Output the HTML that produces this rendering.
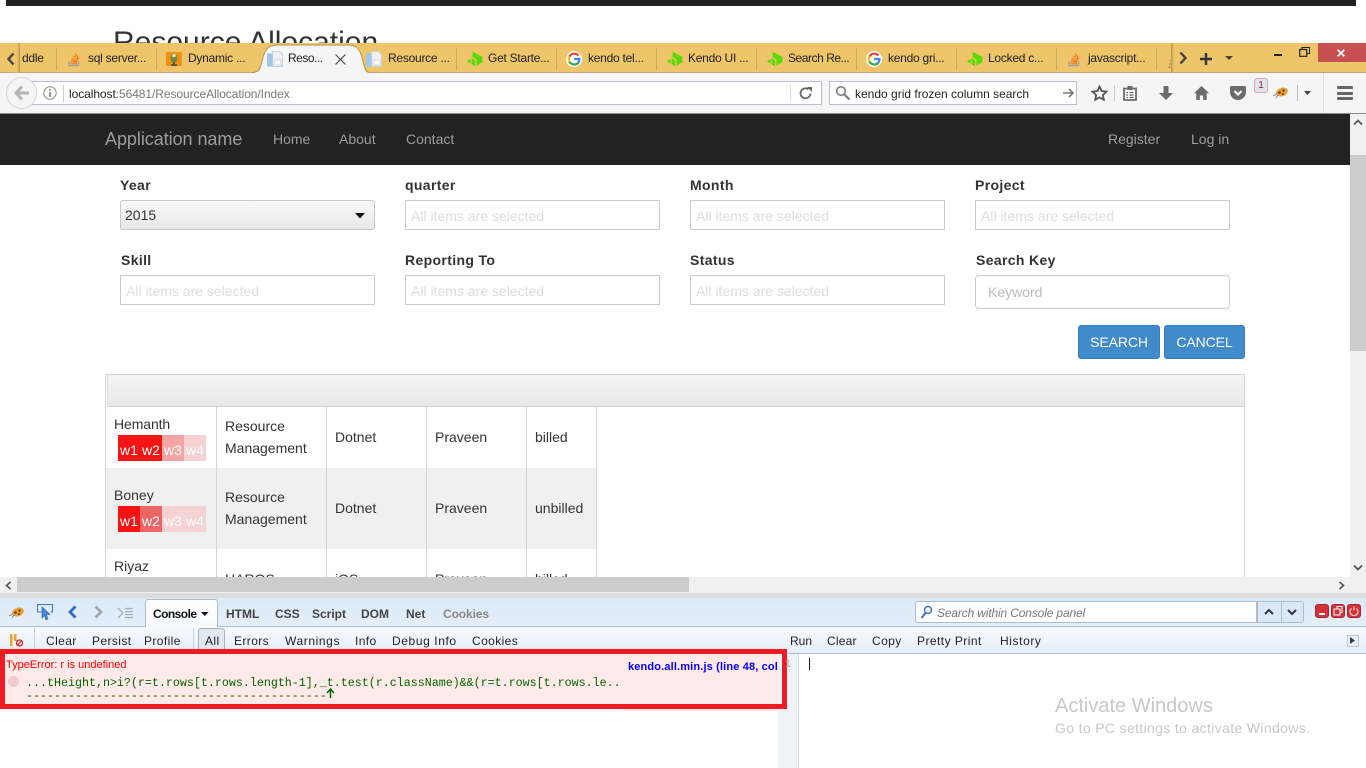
<!DOCTYPE html>
<html><head><meta charset="utf-8"><title>Resource Allocation</title>
<style>
html,body{margin:0;padding:0;width:1366px;height:768px;overflow:hidden;background:#fff;font-family:"Liberation Sans",sans-serif;color:#333}
.a{position:absolute;white-space:nowrap}
.tab{position:absolute;top:43px;height:30px;line-height:31px;font-size:12px;color:#222;white-space:nowrap;letter-spacing:-.25px}
.sep{position:absolute;top:48px;width:1px;height:22px;background:#c9a85f}
.lb{position:absolute;font-size:14px;font-weight:bold;color:#333;line-height:16px;white-space:nowrap;letter-spacing:.35px}
.ms{position:absolute;box-sizing:border-box;width:255px;height:30px;border:1px solid #ccc;background:#fff;font-size:14px;color:#ddd;padding-left:5px;line-height:30px;white-space:nowrap}
.nv{position:absolute;font-size:14px;color:#9d9d9d;top:131px;line-height:16px;white-space:nowrap}
.btn{position:absolute;top:325px;height:34px;box-sizing:border-box;background:#428bca;border:1px solid #357ebd;border-radius:3px;color:#fff;font-size:14px;line-height:32px;text-align:center;letter-spacing:-.1px}
.cell{position:absolute;font-size:14px;color:#333;white-space:nowrap;line-height:22px}
.vl{position:absolute;top:407px;width:1px;height:170px;background:#d5d5d5}
.w{position:absolute;width:22px;height:26px;line-height:30px;text-align:center;color:#fff;font-size:14px}
.fb{position:absolute;font-size:12px;color:#222;line-height:14px;white-space:nowrap}
.r2{letter-spacing:.4px}
.fbb{font-weight:bold;color:#444}
.mono{position:absolute;font-family:"Liberation Mono",monospace;font-size:11.67px;color:#060;white-space:pre;line-height:12px}
.rb{position:absolute;top:604px;width:14px;height:14px;box-sizing:border-box;background:#d5333a;border:1px solid #a8252b;border-radius:3px}
</style></head><body>

<!-- Page behind -->
<div class="a" style="left:6px;top:0;width:1350px;height:6px;background:#222"></div>
<div class="a" style="left:113px;top:26px;font-size:30px;line-height:34px;color:#333">Resource Allocation</div>

<!-- Tab bar -->
<div class="a" style="left:0;top:43px;width:1366px;height:30px;background:#eec568;overflow:hidden"></div>
<div class="a" style="left:0;top:72px;width:1366px;height:1px;background:#b8a880"></div>
<div class="a" style="left:17px;top:43px;width:3px;height:30px;background:linear-gradient(90deg,#eec568,#b59550)"></div>
<svg class="a" style="left:6px;top:52px" width="10" height="14"><path d="M7.500 1.500L2.500 7l5 5.500" fill="none" stroke="#444" stroke-width="2.400"/></svg>
<div class="tab" style="left:22px">ddle</div>
<div class="sep" style="left:56px"></div>
<svg class="a" style="left:67px;top:52px" width="14" height="15"><path d="M2 9v4.500h9.500V9" fill="none" stroke="#9aa5b5" stroke-width="1.400"/><path d="M3.500 11.500h6.500M3.800 9l6.300 1M4.500 6.500l6 2.500M6 3.800l5.200 3.800M8 1.500l4 5" fill="none" stroke="#f48024" stroke-width="1.400"/></svg>
<div class="tab" style="left:88px">sql server...</div>
<div class="sep" style="left:156px"></div>
<svg class="a" style="left:166px;top:52px" width="16" height="14"><path d="M0 0h16v14H0z" fill="#f29111"/><ellipse cx="8" cy="6" rx="3.500" ry="4.500" fill="#6f8a3a"/><circle cx="8" cy="3.500" r="1.800" fill="#dfe6c0"/><path d="M5 13h6" stroke="#444" stroke-width="1.500"/><path d="M8 10v3" stroke="#555" stroke-width="2"/></svg>
<div class="tab" style="left:188px">Dynamic ...</div>
<!-- active tab -->
<svg class="a" style="left:252px;top:44px" width="118" height="30"><path d="M0 28.500C8 28.500 8 24 10 17 12.500 7 15 1 25 1h71c10 0 12.500 6 15 16 2 7 2 11.500 7 11.500V30H0z" fill="#f5f5f5" stroke="#b5924c" stroke-width="1"/><path d="M0 29h118v1H0z" fill="#f5f5f5"/></svg>
<svg class="a" style="left:267px;top:51px" width="16" height="17"><path d="M5.500.5h7l3 3v12h-10z" fill="#eef0f3" stroke="#ccd2da"/><path d="M0 2.500h5.500v13H0z" fill="#9fc5e8"/><path d="M7 9h7v5H7z" fill="#fff" stroke="#d3d6da"/></svg>
<div class="tab" style="left:288px;letter-spacing:-.5px">Reso...</div>
<svg class="a" style="left:335px;top:54px" width="11" height="11"><path d="M.5.500l10 10M10.500.500l-10 10" stroke="#444" stroke-width="1.100"/></svg>
<svg class="a" style="left:366px;top:51px" width="16" height="17"><path d="M5.500.5h7l3 3v12h-10z" fill="#eef0f3" stroke="#ccd2da"/><path d="M0 2.500h5.500v13H0z" fill="#9fc5e8"/><path d="M7 9h7v5H7z" fill="#fff" stroke="#d3d6da"/></svg>
<div class="tab" style="left:388px">Resource ...</div>
<div class="sep" style="left:456px"></div>
<svg class="a" style="left:467px;top:51px" width="16" height="16"><path d="M5.500.5L15.500 6v5L9.500 15V8.500L5.500 6zM4.500 7L8.200 9.300V15.500L4.500 13.200zM.5 9.500L3.500 8v4.500L.5 11z" fill="#5fd80a"/></svg>
<div class="tab" style="left:488px">Get Starte...</div>
<div class="sep" style="left:556px"></div>
<svg class="a" style="left:566px;top:51px" width="16" height="16"><circle cx="8" cy="8" r="8" fill="#fff"/><path d="M12.500 4.500A5.700 5.700 0 0 0 3.400 5.500" fill="none" stroke="#ea4335" stroke-width="2.200"/><path d="M3.400 5.400a5.700 5.700 0 0 0 0 5.200" fill="none" stroke="#fbbc05" stroke-width="2.200"/><path d="M3.400 10.600a5.700 5.700 0 0 0 8.800 1.400" fill="none" stroke="#34a853" stroke-width="2.200"/><path d="M8 8h5.500a5.700 5.700 0 0 1-1.500 4" fill="none" stroke="#4285f4" stroke-width="2.200"/></svg>
<div class="tab" style="left:588px">kendo tel...</div>
<div class="sep" style="left:656px"></div>
<svg class="a" style="left:667px;top:51px" width="16" height="16"><path d="M5.500.5L15.500 6v5L9.500 15V8.500L5.500 6zM4.500 7L8.200 9.300V15.500L4.500 13.200zM.5 9.500L3.500 8v4.500L.5 11z" fill="#5fd80a"/></svg>
<div class="tab" style="left:688px">Kendo UI ...</div>
<div class="sep" style="left:756px"></div>
<svg class="a" style="left:767px;top:51px" width="16" height="16"><path d="M5.500.5L15.500 6v5L9.500 15V8.500L5.500 6zM4.500 7L8.200 9.300V15.500L4.500 13.200zM.5 9.500L3.500 8v4.500L.5 11z" fill="#5fd80a"/></svg>
<div class="tab" style="left:788px;letter-spacing:-.45px">Search Re...</div>
<div class="sep" style="left:856px"></div>
<svg class="a" style="left:866px;top:51px" width="16" height="16"><circle cx="8" cy="8" r="8" fill="#fff"/><path d="M12.500 4.500A5.700 5.700 0 0 0 3.400 5.500" fill="none" stroke="#ea4335" stroke-width="2.200"/><path d="M3.400 5.400a5.700 5.700 0 0 0 0 5.200" fill="none" stroke="#fbbc05" stroke-width="2.200"/><path d="M3.400 10.600a5.700 5.700 0 0 0 8.800 1.400" fill="none" stroke="#34a853" stroke-width="2.200"/><path d="M8 8h5.500a5.700 5.700 0 0 1-1.500 4" fill="none" stroke="#4285f4" stroke-width="2.200"/></svg>
<div class="tab" style="left:888px">kendo gri...</div>
<div class="sep" style="left:956px"></div>
<svg class="a" style="left:967px;top:51px" width="16" height="16"><path d="M5.500.5L15.500 6v5L9.500 15V8.500L5.500 6zM4.500 7L8.200 9.300V15.500L4.500 13.200zM.5 9.500L3.500 8v4.500L.5 11z" fill="#5fd80a"/></svg>
<div class="tab" style="left:988px">Locked c...</div>
<div class="sep" style="left:1056px"></div>
<svg class="a" style="left:1067px;top:52px" width="14" height="15"><path d="M2 9v4.500h9.500V9" fill="none" stroke="#9aa5b5" stroke-width="1.400"/><path d="M3.500 11.500h6.500M3.800 9l6.300 1M4.500 6.500l6 2.500M6 3.800l5.200 3.800M8 1.500l4 5" fill="none" stroke="#f48024" stroke-width="1.400"/></svg>
<div class="tab" style="left:1088px">javascript...</div>
<div class="sep" style="left:1156px"></div>
<svg class="a" style="left:1167px;top:55px" width="6" height="14"><path d="M1 12h4M2 9h3M3 6h2" stroke="#b58c50" stroke-width="1.200"/></svg>
<div class="a" style="left:1171px;top:43px;width:3px;height:30px;background:linear-gradient(270deg,#eec568,#b59550)"></div>
<svg class="a" style="left:1178px;top:51px" width="10" height="14"><path d="M2.500 1.500L7.500 7l-5 5.500" fill="none" stroke="#444" stroke-width="2.400"/></svg>
<svg class="a" style="left:1200px;top:53px" width="12" height="12"><path d="M6 0v12M0 6h12" stroke="#333" stroke-width="2.400"/></svg>
<svg class="a" style="left:1225px;top:56px" width="8" height="4"><path d="M0 0h8L4 4z" fill="#444"/></svg>
<div class="a" style="left:1274px;top:54px;width:8px;height:2px;background:#222"></div>
<svg class="a" style="left:1299px;top:47px" width="11" height="10"><path d="M3 2.500V.5h7.500v6H8.500" fill="none" stroke="#222"/><path d="M.7 2.500h7v6.800h-7z" fill="none" stroke="#222" stroke-width="1.200"/></svg>
<div class="a" style="left:1318px;top:43px;width:48px;height:19px;background:#c75050"></div>
<svg class="a" style="left:1337px;top:49px" width="8" height="8"><path d="M.7.700l6.600 6.600M7.300.700L.7 7.300" stroke="#fff" stroke-width="1.800"/></svg>

<!-- Nav bar -->
<div class="a" style="left:0;top:73px;width:1366px;height:41px;background:#f5f5f5"></div>
<div class="a" style="left:0;top:113px;width:1366px;height:1px;background:#8a8a8a"></div>
<div class="a" style="left:22px;top:81px;width:800px;height:24px;box-sizing:border-box;background:#fff;border:1px solid #b8bfca"></div>
<div class="a" style="left:790px;top:85px;width:1px;height:16px;background:#ddd"></div>
<div class="a" style="left:6px;top:77px;width:31px;height:32px;box-sizing:border-box;background:#f5f5f5;border:1px solid #d0d3d8;border-radius:50%"></div>
<svg class="a" style="left:14px;top:85px" width="15" height="16"><path d="M8 1.500L2 8l6 6.500M3 8h12" fill="none" stroke="#b4b4b4" stroke-width="3"/></svg>
<svg class="a" style="left:43px;top:86px" width="14" height="14"><circle cx="7" cy="7" r="6.200" fill="none" stroke="#888"/><path d="M7 6v5" stroke="#777" stroke-width="1.500"/><circle cx="7" cy="3.800" r="1" fill="#777"/></svg>
<div class="a" style="left:63px;top:85px;width:1px;height:17px;background:#ccc"></div>
<div class="a" style="left:69px;top:86px;font-size:12px;line-height:15px;color:#222;margin-top:1px;letter-spacing:-.07px">localhost<span style="color:#777">:56481/ResourceAllocation/Index</span></div>
<svg class="a" style="left:798px;top:86px" width="16" height="15"><path d="M12.500 7.500a5 5 0 1 1-2-4.200" fill="none" stroke="#666" stroke-width="1.800"/><path d="M9 1h5v5z" fill="#666"/></svg>
<div class="a" style="left:829px;top:81px;width:248px;height:24px;box-sizing:border-box;background:#fff;border:1px solid #b8bfca"></div>
<svg class="a" style="left:835px;top:85px" width="16" height="16"><circle cx="6" cy="6" r="4.300" fill="none" stroke="#777" stroke-width="1.500"/><path d="M9.500 9.500l5 5" stroke="#777" stroke-width="2"/></svg>
<div class="a" style="left:855px;top:87px;font-size:12px;line-height:15px;color:#222">kendo grid frozen column search</div>
<svg class="a" style="left:1062px;top:87px" width="13" height="12"><path d="M1 6h10M7 2l4 4-4 4" fill="none" stroke="#777" stroke-width="1.600"/></svg>
<svg class="a" style="left:1091px;top:85px" width="17" height="16"><path d="M8.500 1.500l2.100 4.500 5 .6-3.700 3.300.9 4.900-4.300-2.400-4.300 2.400.9-4.900L1.400 6.600l5-.6z" fill="none" stroke="#555" stroke-width="1.800"/></svg>
<div class="a" style="left:1114px;top:85px;width:1px;height:16px;background:#ccc"></div>
<svg class="a" style="left:1123px;top:85px" width="14" height="16"><path d="M1 3.500h12V15H1z" fill="none" stroke="#6b6b6b" stroke-width="1.800"/><path d="M4.500 1h5v4h-5z" fill="#6b6b6b"/><path d="M3.500 7.500h1.500M6.500 7.500h4M3.500 10h1.500M6.500 10h4M3.500 12.500h1.500M6.500 12.500h4" stroke="#6b6b6b" stroke-width="1.200"/></svg>
<svg class="a" style="left:1159px;top:86px" width="14" height="14"><path d="M4.500 0h5v7H14l-7 7-7-7h4.500z" fill="#6b6b6b"/></svg>
<svg class="a" style="left:1194px;top:86px" width="15" height="14"><path d="M7.500 0L0 7.200h2.300V14h3.500V9.500h3.400V14h3.500V7.200H15z" fill="#6b6b6b"/></svg>
<svg class="a" style="left:1230px;top:86px" width="16" height="14"><path d="M1.500 0h13A1.500 1.500 0 0 1 16 1.500V6c0 4.500-3.500 8-8 8S0 10.500 0 6V1.500A1.500 1.500 0 0 1 1.500 0z" fill="#6b6b6b"/><path d="M4.500 5l3.500 3.500L11.500 5" fill="none" stroke="#f5f5f5" stroke-width="2.200"/></svg>
<div class="a" style="left:1254px;top:78px;width:14px;height:15px;box-sizing:border-box;background:#dfe5ee;border:1px solid #d5a8ad;border-radius:3px;font-size:10px;line-height:13px;text-align:center;color:#8a1c1c">1</div>
<svg class="a" style="left:1273px;top:86px" width="16" height="13"><ellipse cx="9" cy="6" rx="6" ry="4.200" transform="rotate(-20 9 6)" fill="#eca033"/><circle cx="6.500" cy="6.500" r="1.300" fill="#6a3510"/><circle cx="10.500" cy="4.500" r="1.200" fill="#6a3510"/><circle cx="10" cy="8" r="1" fill="#6a3510"/><path d="M0 10l4-2M3 12l2-3" stroke="#777" stroke-width=".8"/></svg>
<div class="a" style="left:1297px;top:85px;width:1px;height:16px;background:#bbb"></div>
<svg class="a" style="left:1304px;top:91px" width="7" height="4"><path d="M0 0h7L3.500 4z" fill="#444"/></svg>
<div class="a" style="left:1323px;top:73px;width:1px;height:40px;background:#e2e2e2"></div>
<div class="a" style="left:1337px;top:86px;width:16px;height:3px;background:#666;border-radius:1px"></div>
<div class="a" style="left:1337px;top:92px;width:16px;height:3px;background:#666;border-radius:1px"></div>
<div class="a" style="left:1337px;top:97px;width:16px;height:3px;background:#666;border-radius:1px"></div>

<!-- Dark navbar -->
<div class="a" style="left:0;top:114px;width:1350px;height:51px;background:#222"></div>
<div class="a" style="left:105px;top:129px;font-size:18px;line-height:21px;color:#9d9d9d;letter-spacing:-.05px">Application name</div>
<div class="nv" style="left:273px">Home</div>
<div class="nv" style="left:339px">About</div>
<div class="nv" style="left:406px">Contact</div>
<div class="nv" style="left:1108px">Register</div>
<div class="nv" style="left:1191px">Log in</div>

<!-- Scrollbars -->
<div class="a" style="left:1350px;top:114px;width:16px;height:463px;background:#f0f0f0"></div>
<div class="a" style="left:1350px;top:155px;width:16px;height:196px;background:#cdcdcd"></div>
<svg class="a" style="left:1353px;top:119px" width="10" height="7"><path d="M1 5.500L5 1.500l4 4" fill="none" stroke="#555" stroke-width="1.700"/></svg>
<svg class="a" style="left:1353px;top:564px" width="10" height="7"><path d="M1 1.500L5 5.500l4-4" fill="none" stroke="#555" stroke-width="1.700"/></svg>

<!-- Filters -->
<div class="lb" style="left:120px;top:177px">Year</div>
<div class="lb" style="left:405px;top:177px">quarter</div>
<div class="lb" style="left:690px;top:177px">Month</div>
<div class="lb" style="left:975px;top:177px">Project</div>
<div class="a" style="left:120px;top:200px;width:255px;height:30px;box-sizing:border-box;border:1px solid #c8c8c8;border-radius:3px;background:linear-gradient(#f8f8f8,#e8e8e8);font-size:14px;line-height:28px;padding-left:4px;color:#333">2015</div>
<svg class="a" style="left:355px;top:213px" width="10" height="6"><path d="M0 0h10L5 5.500z" fill="#111"/></svg>
<div class="ms" style="left:405px;top:200px">All items are selected</div>
<div class="ms" style="left:690px;top:200px">All items are selected</div>
<div class="ms" style="left:975px;top:200px">All items are selected</div>
<div class="lb" style="left:121px;top:252px">Skill</div>
<div class="lb" style="left:405px;top:252px">Reporting To</div>
<div class="lb" style="left:690px;top:252px">Status</div>
<div class="lb" style="left:976px;top:252px">Search Key</div>
<div class="ms" style="left:120px;top:275px">All items are selected</div>
<div class="ms" style="left:405px;top:275px">All items are selected</div>
<div class="ms" style="left:690px;top:275px">All items are selected</div>
<div class="a" style="left:975px;top:275px;width:255px;height:34px;box-sizing:border-box;border:1px solid #ccc;border-radius:4px;font-size:14px;line-height:33px;padding-left:12px;color:#bbb;background:#fff">Keyword</div>
<div class="btn" style="left:1078px;width:82px">SEARCH</div>
<div class="btn" style="left:1164px;width:81px">CANCEL</div>

<!-- Grid -->
<div class="a" style="left:105px;top:374px;width:1140px;height:203px;box-sizing:border-box;border:1px solid #d5d5d5;border-bottom:0"></div>
<div class="a" style="left:107px;top:375px;width:1137px;height:32px;box-sizing:border-box;background:linear-gradient(#f5f5f5,#e8e8e8);border-bottom:1px solid #d0d0d0;border-left:1px solid #ddd"></div>
<div class="a" style="left:106px;top:468px;width:491px;height:81px;background:#f0f0f0"></div>
<div class="vl" style="left:216px"></div>
<div class="vl" style="left:326px"></div>
<div class="vl" style="left:426px"></div>
<div class="vl" style="left:526px"></div>
<div class="vl" style="left:596px"></div>

<div class="cell" style="left:114px;top:413px;letter-spacing:-.1px">Hemanth</div>
<div class="w" style="left:118px;top:435px;background:#f51313">w1</div>
<div class="w" style="left:140px;top:435px;background:#f51313">w2</div>
<div class="w" style="left:162px;top:435px;background:#f6a5a5">w3</div>
<div class="w" style="left:184px;top:435px;background:#f5d3d3">w4</div>
<div class="cell" style="left:225px;top:415px">Resource<br>Management</div>
<div class="cell" style="left:335px;top:426px">Dotnet</div>
<div class="cell" style="left:435px;top:426px">Praveen</div>
<div class="cell" style="left:535px;top:426px">billed</div>

<div class="cell" style="left:114px;top:484px">Boney</div>
<div class="w" style="left:118px;top:506px;background:#f51313">w1</div>
<div class="w" style="left:140px;top:506px;background:#ee6565">w2</div>
<div class="w" style="left:162px;top:506px;background:#f5d3d3">w3</div>
<div class="w" style="left:184px;top:506px;background:#f5d3d3">w4</div>
<div class="cell" style="left:225px;top:486px">Resource<br>Management</div>
<div class="cell" style="left:335px;top:497px">Dotnet</div>
<div class="cell" style="left:435px;top:497px">Praveen</div>
<div class="cell" style="left:535px;top:497px">unbilled</div>

<div class="cell" style="left:114px;top:555px">Riyaz</div>
<div class="cell" style="left:225px;top:568px">HAROS</div>
<div class="cell" style="left:335px;top:568px">iOS</div>
<div class="cell" style="left:435px;top:568px">Praveen</div>
<div class="cell" style="left:535px;top:568px">billed</div>

<!-- Horizontal scrollbar -->
<div class="a" style="left:0;top:577px;width:1366px;height:16px;background:#f0f0f0"></div>
<div class="a" style="left:17px;top:577px;width:672px;height:15px;background:#cdcdcd"></div>
<svg class="a" style="left:5px;top:581px" width="7" height="9"><path d="M5.500 1L1.500 4.500 5.500 8" fill="none" stroke="#555" stroke-width="1.700"/></svg>
<svg class="a" style="left:1338px;top:581px" width="7" height="9"><path d="M1.500 1L5.500 4.500 1.500 8" fill="none" stroke="#555" stroke-width="1.700"/></svg>

<!-- Firebug -->
<div class="a" style="left:0;top:593px;width:1366px;height:5px;background:#dcdcdc"></div>
<div class="a" style="left:0;top:598px;width:1366px;height:28px;background:linear-gradient(#dbeaf8,#e4eef9)"></div>
<div class="a" style="left:0;top:626px;width:1366px;height:1px;background:#a9bdd3"></div>
<div class="a" style="left:0;top:627px;width:1366px;height:26px;background:linear-gradient(#f7fafe,#e4eef9)"></div>
<div class="a" style="left:0;top:653px;width:1366px;height:1px;background:#a9bdd3"></div>
<svg class="a" style="left:9px;top:606px" width="16" height="13"><ellipse cx="9" cy="6" rx="6" ry="4.200" transform="rotate(-20 9 6)" fill="#eca033"/><circle cx="6.500" cy="6.500" r="1.300" fill="#6a3510"/><circle cx="10.500" cy="4.500" r="1.200" fill="#6a3510"/><circle cx="10" cy="8" r="1" fill="#6a3510"/><path d="M0 10l4-2M3 12l2-3" stroke="#777" stroke-width=".8"/></svg>
<svg class="a" style="left:37px;top:604px" width="17" height="17"><path d="M5.500 8H.5V.5h15V8h-2" fill="none" stroke="#3a78c2" stroke-width="1.100"/><path d="M5 3l8 7.500H9.500L11 15l-2 1-1.500-4.500L5 14z" fill="#4a8ad4" stroke="#2a5a9a" stroke-width=".6"/></svg>
<svg class="a" style="left:67px;top:605px" width="11" height="14"><path d="M8.500 1.500L3 7l5.500 5.500" fill="none" stroke="#2f6cc0" stroke-width="2.800"/></svg>
<svg class="a" style="left:93px;top:605px" width="11" height="14"><path d="M2.500 1.500L8 7l-5.500 5.500" fill="none" stroke="#a0a6ae" stroke-width="2.800"/></svg>
<svg class="a" style="left:117px;top:607px" width="17" height="12"><path d="M1 1l5 5-5 5M8 1.500h8M8 4.500h8M8 7.500h8M8 10.500h8" fill="none" stroke="#a8adb3" stroke-width="1.300"/></svg>
<div class="a" style="left:145px;top:599px;width:73px;height:28px;box-sizing:border-box;background:linear-gradient(#fff,#f7fafe);border:1px solid #a9bdd3;border-bottom:0;border-radius:3px 3px 0 0"></div>
<div class="fb" style="left:153px;top:607px;font-weight:bold;color:#111;letter-spacing:-.55px">Console</div>
<svg class="a" style="left:201px;top:612px" width="8" height="5"><path d="M0 0h7.500L3.750 4z" fill="#111"/></svg>
<div class="fb fbb" style="left:226px;top:607px">HTML</div>
<div class="fb fbb" style="left:275px;top:607px">CSS</div>
<div class="fb fbb" style="left:312px;top:607px">Script</div>
<div class="fb fbb" style="left:361px;top:607px">DOM</div>
<div class="fb fbb" style="left:406px;top:607px">Net</div>
<div class="fb fbb" style="left:443px;top:607px;color:#888;letter-spacing:-.1px">Cookies</div>

<div class="a" style="left:915px;top:601px;width:342px;height:22px;box-sizing:border-box;background:#fff;border:1px solid #a9bdd3;border-radius:3px 0 0 3px"></div>
<svg class="a" style="left:920px;top:605px" width="13" height="15"><circle cx="8" cy="5" r="3.500" fill="none" stroke="#3a78c2" stroke-width="1.500"/><path d="M5.500 8L1.500 13" stroke="#3a78c2" stroke-width="2"/></svg>
<div class="fb" style="left:937px;top:606px;font-style:italic;color:#777;letter-spacing:-.15px">Search within Console panel</div>
<div class="a" style="left:1257px;top:601px;width:47px;height:22px;box-sizing:border-box;background:#dbe7f4;border:1px solid #a9bdd3;border-radius:0 3px 3px 0"></div>
<div class="a" style="left:1281px;top:601px;width:1px;height:22px;background:#a9bdd3"></div>
<svg class="a" style="left:1264px;top:608px" width="10" height="8"><path d="M1 6l4-4 4 4" fill="none" stroke="#334" stroke-width="2"/></svg>
<svg class="a" style="left:1287px;top:608px" width="10" height="8"><path d="M1 2l4 4 4-4" fill="none" stroke="#334" stroke-width="2"/></svg>
<div class="rb" style="left:1315px"></div>
<div class="rb" style="left:1331px"></div>
<div class="rb" style="left:1347px"></div>
<div class="a" style="left:1319px;top:613px;width:6px;height:2px;background:#fff"></div>
<svg class="a" style="left:1333px;top:606px" width="10" height="10"><path d="M4 2.500V.5h5v6H7M1 3h6v6H1z" fill="none" stroke="#fff"/></svg>
<svg class="a" style="left:1349px;top:606px" width="10" height="10"><path d="M2.500 2.500a4 4 0 1 0 5 0M5 .5v4" fill="none" stroke="#f5c8c8" stroke-width="1.200"/></svg>

<svg class="a" style="left:10px;top:634px" width="14" height="13"><path d="M0 0h2.500v12H0z" fill="#f0a030"/><path d="M4 0h2.500v7H4z" fill="#f0a030"/><circle cx="9.500" cy="9" r="3" fill="#fff" stroke="#d02020" stroke-width="1.300"/><path d="M7.500 11l4-4" stroke="#d02020" stroke-width="1.200"/></svg>
<div class="a" style="left:34px;top:628px;width:1px;height:22px;background:#c5d1de"></div>
<div class="fb r2" style="left:46px;top:634px">Clear</div>
<div class="fb r2" style="left:92px;top:634px">Persist</div>
<div class="fb r2" style="left:144px;top:634px">Profile</div>
<div class="a" style="left:193px;top:628px;width:1px;height:22px;background:#c5d1de"></div>
<div class="a" style="left:198px;top:628px;width:27px;height:26px;box-sizing:border-box;background:#e2e8f0;border:1px solid #a8b4c2;border-bottom:0;border-radius:3px 3px 0 0"></div>
<div class="fb r2" style="left:205px;top:634px">All</div>
<div class="fb r2" style="left:234px;top:634px">Errors</div>
<div class="fb r2" style="left:285px;top:634px;letter-spacing:.6px">Warnings</div>
<div class="fb r2" style="left:355px;top:634px">Info</div>
<div class="fb r2" style="left:392px;top:634px;letter-spacing:.6px">Debug Info</div>
<div class="fb r2" style="left:472px;top:634px">Cookies</div>
<div class="fb" style="left:790px;top:634px">Run</div>
<div class="fb" style="left:827px;top:634px;letter-spacing:.2px">Clear</div>
<div class="fb" style="left:872px;top:634px;letter-spacing:.4px">Copy</div>
<div class="fb" style="left:917px;top:634px;letter-spacing:.45px">Pretty Print</div>
<div class="fb" style="left:1000px;top:634px;letter-spacing:.6px">History</div>
<div class="a" style="left:1347px;top:635px;width:12px;height:12px;box-sizing:border-box;background:#e8f0f9;border:1px solid #b8c8da"></div>
<svg class="a" style="left:1350px;top:637px" width="6" height="8"><path d="M0 0l5 3.500L0 7z" fill="#335"/></svg>

<!-- Console error -->
<div class="a" style="left:0;top:654px;width:778px;height:55px;background:#ffe9e9"></div>
<div class="a" style="left:624px;top:709px;width:154px;height:2px;background:#ffe9e9"></div>
<div class="a" style="left:778px;top:654px;width:21px;height:114px;background:#eef3fa"></div>
<div class="a" style="left:798px;top:654px;width:1px;height:114px;background:#d5dbe3"></div>
<div class="fb" style="left:6px;top:658px;color:#f00;font-size:11px">TypeError: r is undefined</div>
<div class="fb" style="left:628px;top:660px;color:#00f;font-size:11px;font-weight:bold;width:150px;overflow:hidden;letter-spacing:.15px">kendo.all.min.js (line 48, col</div>
<div class="a" style="left:8px;top:676px;width:11px;height:11px;border-radius:50%;background:#f3c9c9"></div>
<div class="mono" style="left:26px;top:677px;width:595px;overflow:hidden">...tHeight,n&gt;i?(r=t.rows[t.rows.length-1],_t.test(r.className)&amp;&amp;(r=t.rows[t.rows.le..</div>
<div class="mono" style="left:26px;top:690px">-------------------------------------------</div>
<svg class="a" style="left:326px;top:688px" width="9" height="11"><path d="M4.500 1v9M1 5l3.500-4L8 5" fill="none" stroke="#060" stroke-width="1.500"/></svg>
<div class="a" style="left:0;top:649px;width:787px;height:60px;box-sizing:border-box;border:5px solid #ed1c24"></div>
<div class="a" style="left:785px;top:657px;font-size:11px;color:#aaa;line-height:14px">1</div>
<div class="a" style="left:809px;top:658px;width:1px;height:12px;background:#111"></div>

<!-- Activate Windows -->
<div class="a" style="left:1055px;top:694px;font-size:20px;line-height:24px;color:#c8c8c8">Activate Windows</div>
<div class="a" style="left:1055px;top:720px;font-size:14px;line-height:17px;color:#c8c8c8;letter-spacing:.35px">Go to PC settings to activate Windows.</div>
</body></html>
